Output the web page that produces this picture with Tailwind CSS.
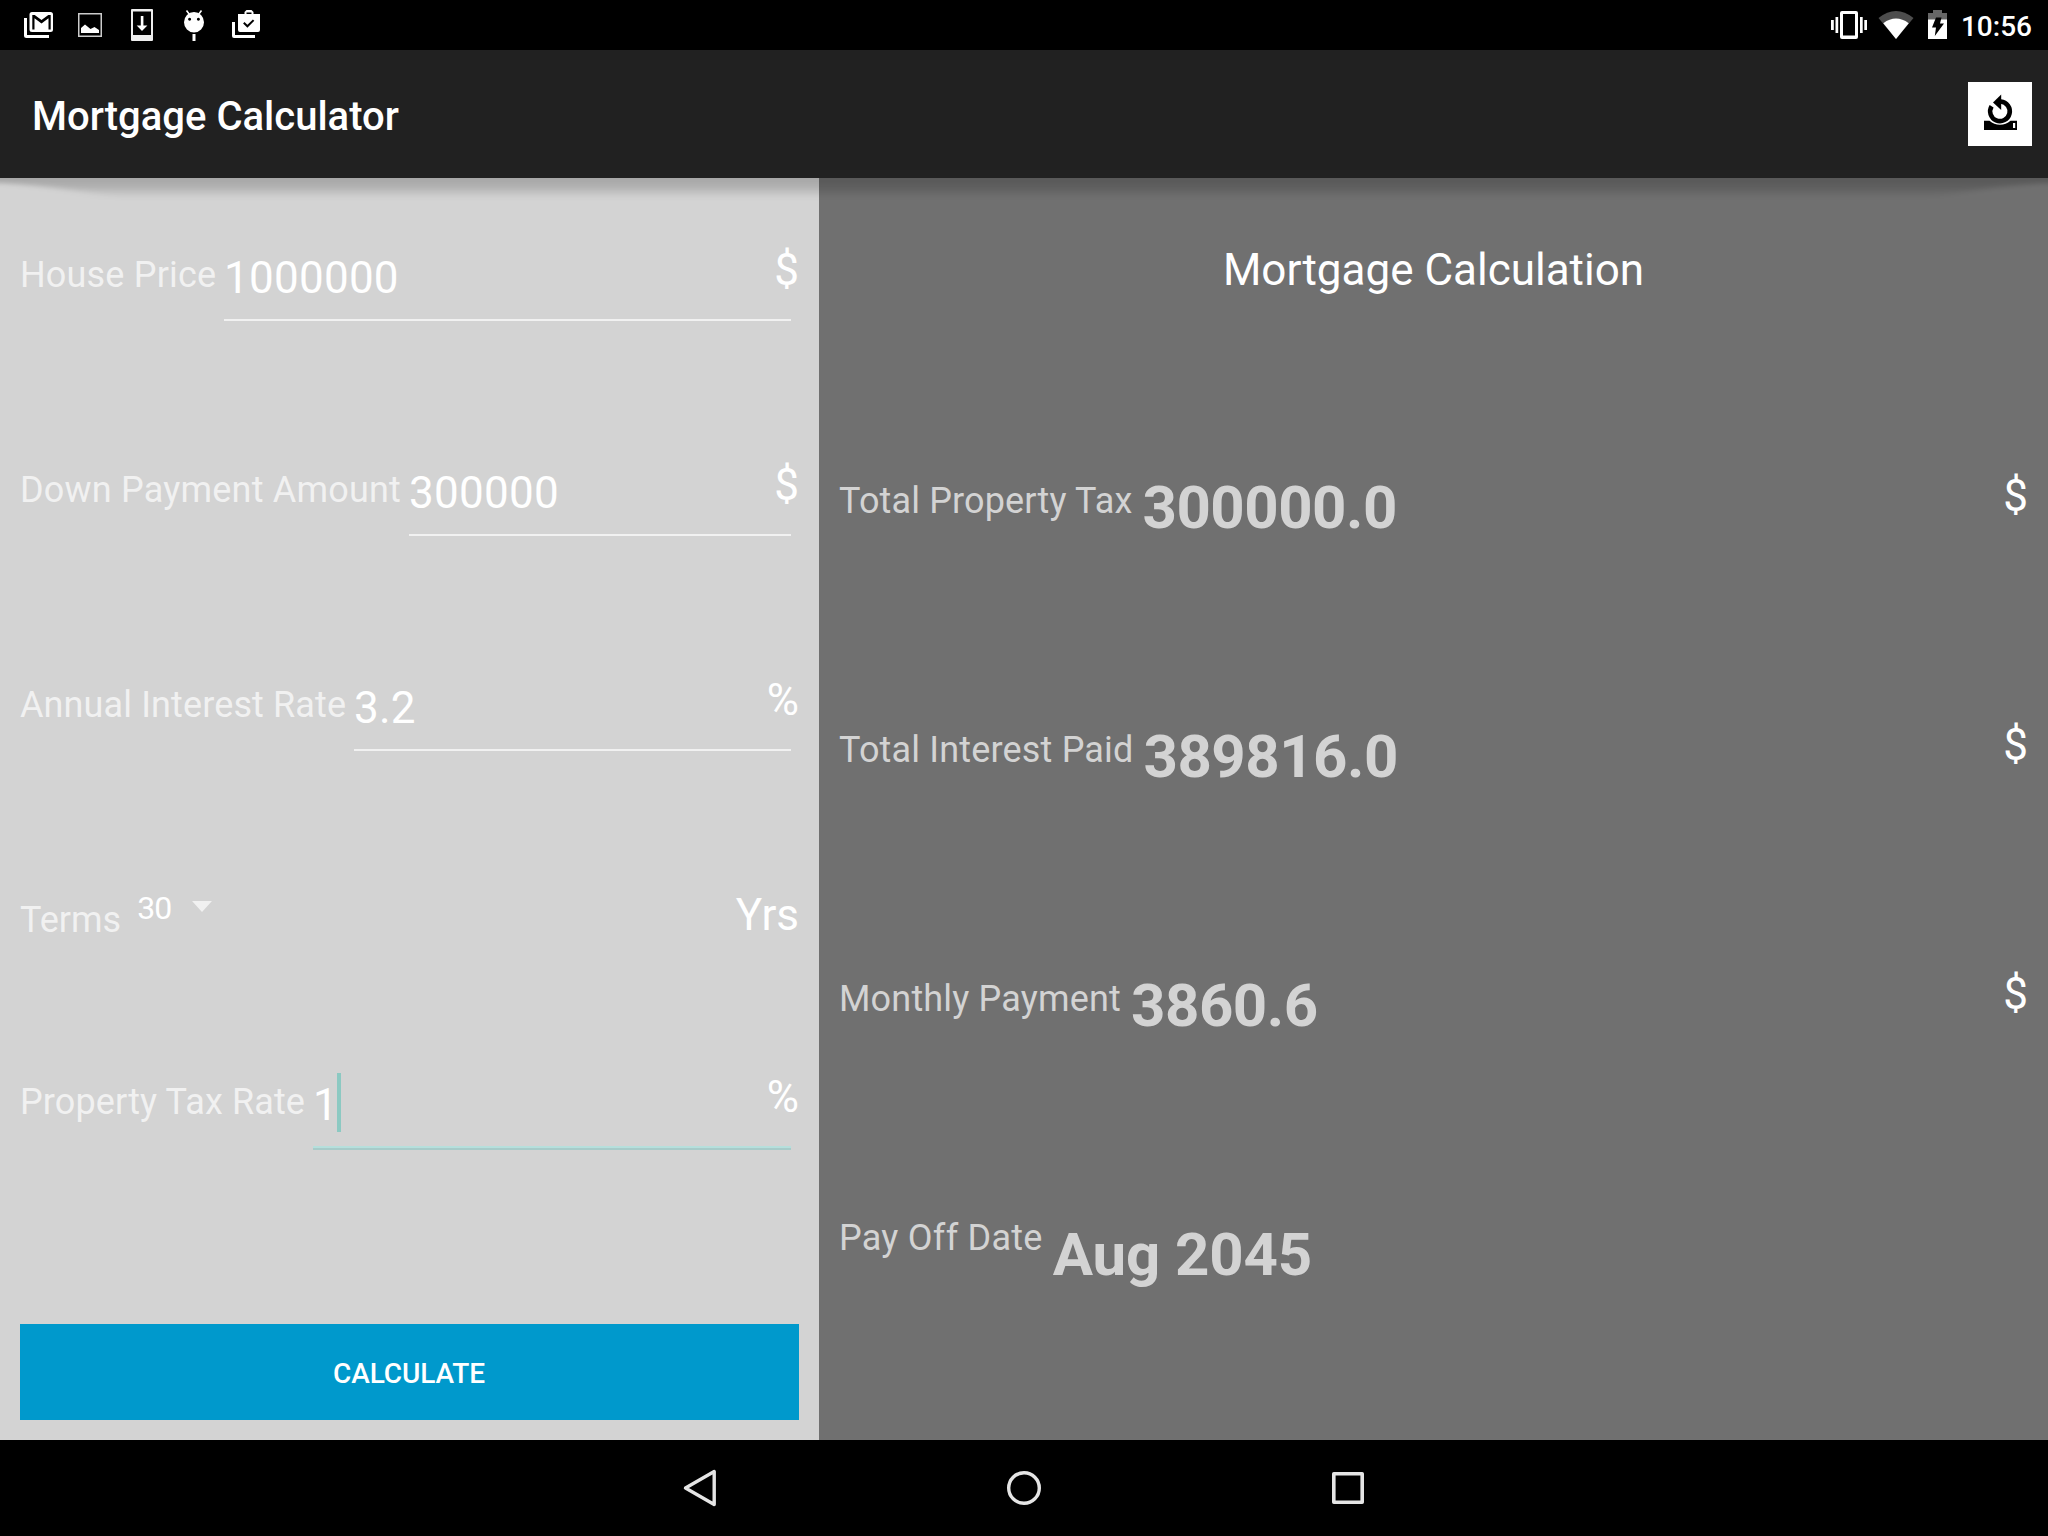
<!DOCTYPE html>
<html lang="en">
<head>
<meta charset="utf-8">
<title>Mortgage Calculator</title>
<script src="https://cdn.jsdelivr.net/npm/@tailwindcss/browser@4"></script>
</head>
<body class="flex h-[1536px] w-[2048px] flex-col overflow-hidden bg-black font-[Roboto,sans-serif] text-white">
  <!-- Status bar -->
  <div class="flex h-[50px] shrink-0 items-start justify-between bg-black">
    <svg width="280" height="50" viewBox="0 0 280 50" fill="#fff">
      <!-- mail stack -->
      <path d="M24 18h3v17h22v3H26.500q-2.500 0-2.500-2.500z"/>
      <path fill-rule="evenodd" d="M32 12h18.500q2.500 0 2.500 2.500v15q0 2.500-2.500 2.500H32q-2.500 0-2.500-2.500v-15q0-2.500 2.500-2.500zM32.300 29.500h2.200V18.300l7 5.200 7-5.200v11.200h2.200V15h-2.400l-6.800 5.100L34.700 15h-2.400z"/>
      <!-- picture -->
      <path fill-rule="evenodd" fill="#ccc" d="M78 13h24v24H78zM79.500 14.500v21h21v-21z"/>
      <path d="M81 33v-5l4-3.500 5.500 4.500 4-2 4.500 3v3z"/>
      <!-- download -->
      <path fill-rule="evenodd" fill="#eee" d="M132 9h20q1 0 1 1v30q0 1-1 1h-20q-1 0-1-1V10q0-1 1-1zM133 11.500V35h18V11.500z"/>
      <path d="M140.800 16h2.600v9.500h4L142 31l-5.300-5.500h4.100z"/>
      <!-- debug robot -->
      <path fill-rule="evenodd" d="M194 12a10 10.300 0 1 1 0 20.600a10 10.300 0 1 1 0-20.600zM189.600 17.700a1.500 1.500 0 1 0 .01 0zM198.400 17.700a1.500 1.500 0 1 0 .01 0z"/>
      <path d="M186.500 10.500l3 4M201.500 10.500l-3 4" stroke="#fff" stroke-width="1.600"/>
      <path d="M192.500 34h3v7h-3z"/>
      <!-- store bag stack -->
      <path d="M232 22h3v13h20v3h-21q-2 0-2-2z"/>
      <path fill-rule="evenodd" d="M238 14h6.500v-2l2-2h5l2 2v2h6.500v16q0 2-2 2h-18q-2 0-2-2zM246.500 12.500V14h5v-1.500z"/>
      <path d="M243.800 22.700l3.600 3.600 6.200-6.200" fill="none" stroke="#000" stroke-width="2"/>
    </svg>
    <div class="flex pr-[16px]">
      <svg class="-mr-[2px]" width="140" height="50" viewBox="1823 0 140 50" fill="#fff">
        <!-- vibrate -->
        <path fill-rule="evenodd" d="M1842 11h14q2 0 2 2v24q0 2-2 2h-14q-2 0-2-2V13q0-2 2-2zM1843 14v21.500h12V14z"/>
        <path d="M1831 20h2.800v10H1831zM1835.500 17h2.700v16h-2.700zM1860 17h2.700v16H1860zM1864.300 20h2.700v10h-2.700z"/>
        <!-- wifi -->
        <path fill="#4d4d4d" d="M1878.500 18q17.500-14 35 0L1896 39z"/>
        <path d="M1883.300 23.200q12.700-9.200 25.400 0L1896 39z"/>
        <!-- charging battery -->
        <path fill="#666" d="M1928 20v-7h5v-3h9v3h5v7z"/>
        <path d="M1928 19.500h19V39h-19z"/>
        <path fill="#000" d="M1936 17.500h5.500l-1.500 6h4L1934.800 36l1.200-8.500h-4z"/>
      </svg>
      <span class="mt-[10px] text-[28px] leading-[33px] font-medium">10:56</span>
    </div>
  </div>

  <!-- App bar -->
  <header class="relative z-10 flex h-[128px] shrink-0 items-center justify-between bg-[#212121] pr-4 pl-8">
    <h1 class="mt-1 text-[40px] leading-[47px] font-medium">Mortgage Calculator</h1>
    <button class="size-16 bg-white">
      <svg width="64" height="64" viewBox="0 0 64 64">
        <path d="M23.600 24.200A9.800 9.800 0 1 0 32.800 19.550" fill="none" stroke="#000" stroke-width="4.600"/>
        <path d="M33.200 12.500v15.500l-8.200-7.600z"/>
        <path fill-rule="evenodd" d="M16 38.700h5.500q4.500 4 10.500 4t10.500-4H49V48H16zM45 41v5h2.200v-5z"/>
      </svg>
    </button>
    <!-- Elevation shadow, tapering at both corners -->
    <svg class="absolute top-full left-0" width="2048" height="32" viewBox="0 0 2048 32">
      <defs>
        <linearGradient id="elevation" gradientUnits="userSpaceOnUse" x1="0" y1="0" x2="0" y2="21">
          <stop offset="0" stop-opacity=".21"/>
          <stop offset=".4" stop-opacity=".165"/>
          <stop offset=".75" stop-opacity=".06"/>
          <stop offset="1" stop-opacity="0"/>
        </linearGradient>
        <filter id="soften" x="-2%" y="-50%" width="104%" height="200%"><feGaussianBlur stdDeviation="12 2"/></filter>
      </defs>
      <path d="M-40-20H2088V5H2048Q1980 9 1925 22H123Q68 9 0 5H-40z" fill="url(#elevation)" filter="url(#soften)"/>
    </svg>
  </header>

  <main class="flex h-[1262px] shrink-0">
    <!-- Loan inputs -->
    <section class="flex w-[819px] flex-col bg-[#d3d3d3] px-5 pt-[66px]">
      <div class="relative flex h-[215px] items-start">
        <label class="mt-[10px] w-[196px] text-[36px] leading-[42px] tracking-[0.18px] whitespace-nowrap text-white/70">House Price</label>
        <div class="mt-2 mr-2 ml-2 flex-1 border-b-2 border-[#f1f1f1] pb-[15px] text-[44px] leading-[52px] tracking-[0.25px]">1000000</div>
        <span class="absolute top-0 right-0 text-[44px] leading-[52px]">$</span>
      </div>
      <div class="relative flex h-[215px] items-start">
        <label class="mt-[10px] w-[381px] text-[36px] leading-[42px] tracking-[0.2px] whitespace-nowrap text-white/70">Down Payment Amount</label>
        <div class="mt-2 mr-2 ml-2 flex-1 border-b-2 border-[#f1f1f1] pb-[15px] text-[44px] leading-[52px] tracking-[0.25px]">300000</div>
        <span class="absolute top-0 right-0 text-[44px] leading-[52px]">$</span>
      </div>
      <div class="relative flex h-[215px] items-start">
        <label class="mt-[10px] w-[326px] text-[36px] leading-[42px] tracking-[0.12px] whitespace-nowrap text-white/70">Annual Interest Rate</label>
        <div class="mt-2 mr-2 ml-2 flex-1 border-b-2 border-[#f1f1f1] pb-[15px] text-[44px] leading-[52px] tracking-[0.2px]">3.2</div>
        <span class="absolute top-0 right-0 text-[44px] leading-[52px]">%</span>
      </div>
      <div class="flex h-[182px] items-start">
        <label class="mt-[10px] text-[36px] leading-[42px] text-white/70">Terms</label>
        <div class="ml-4 flex items-start">
          <span class="text-[32px] leading-[38px] tracking-[-0.8px]">30</span>
          <svg class="mt-3 ml-5" width="20" height="11" viewBox="0 0 20 11" fill="#f1f1f1"><path d="M0 0h20L10 11z"/></svg>
        </div>
        <span class="ml-auto text-[44px] leading-[52px]">Yrs</span>
      </div>
      <div class="relative flex h-[253px] items-start">
        <label class="mt-[10px] w-[285px] text-[36px] leading-[42px] tracking-[0.12px] whitespace-nowrap text-white/70">Property Tax Rate</label>
        <div class="mt-2 mr-2 ml-2 flex flex-1 border-b-2 border-[#a7cbc9] text-[44px] leading-[52px]">
          <div class="flex flex-1 border-b-2 border-[#b6dfdc] pb-[15px]">
            <span>1</span>
            <span class="-mt-[6px] -mb-[1px] -ml-px h-[59px] w-[4px] bg-[#8cc9c2]"></span>
          </div>
        </div>
        <span class="absolute top-0 right-0 text-[44px] leading-[52px]">%</span>
      </div>
      <button class="h-24 bg-[#0099cc] pt-[2px] pr-px text-[28px] leading-[33px] font-medium tracking-[-0.1px]">CALCULATE</button>
    </section>

    <!-- Results -->
    <section class="flex flex-1 flex-col bg-[#707070] px-5 pt-[66px]">
      <h2 class="h-[226px] text-center text-[44px] leading-[52px]">Mortgage Calculation</h2>
      <div class="flex h-[249px] items-start text-[#d3d3d3]">
        <span class="mt-[10px] text-[36px] leading-[42px] tracking-[0.15px]">Total Property Tax</span>
        <span class="mt-[2px] ml-[10px] text-[60px] leading-[71px] font-bold tracking-[-0.5px]">300000.0</span>
        <span class="ml-auto text-[44px] leading-[52px] text-white">$</span>
      </div>
      <div class="flex h-[249px] items-start text-[#d3d3d3]">
        <span class="mt-[10px] text-[36px] leading-[42px] tracking-[0.17px]">Total Interest Paid</span>
        <span class="mt-[2px] ml-[10px] text-[60px] leading-[71px] font-bold tracking-[-0.5px]">389816.0</span>
        <span class="ml-auto text-[44px] leading-[52px] text-white">$</span>
      </div>
      <div class="flex h-[249px] items-start text-[#d3d3d3]">
        <span class="mt-[10px] text-[36px] leading-[42px] tracking-[0.18px]">Monthly Payment</span>
        <span class="mt-[2px] ml-[10px] text-[60px] leading-[71px] font-bold tracking-[-0.5px]">3860.6</span>
        <span class="ml-auto text-[44px] leading-[52px] text-white">$</span>
      </div>
      <div class="flex items-start text-[#d3d3d3]">
        <span class="text-[36px] leading-[42px] tracking-[0.26px]">Pay Off Date</span>
        <span class="mt-[2px] ml-[10px] text-[60px] leading-[71px] font-bold tracking-[-0.15px]">Aug 2045</span>
      </div>
    </section>
  </main>

  <!-- Navigation bar -->
  <nav class="flex h-24 shrink-0 items-center justify-center gap-[284px] bg-black">
    <svg width="40" height="40" viewBox="0 0 40 40" fill="none" stroke="#e5e5e5" stroke-width="3.400" stroke-linejoin="round"><path d="M34.200 3.500v33L5.500 20z"/></svg>
    <svg width="40" height="40" viewBox="0 0 40 40" fill="none" stroke="#e5e5e5" stroke-width="3.400"><circle cx="20" cy="20" r="15.300"/></svg>
    <svg width="40" height="40" viewBox="0 0 40 40" fill="none" stroke="#e5e5e5" stroke-width="3.600" stroke-linejoin="round"><path d="M5.800 5.800h28.400v28.400H5.800z"/></svg>
  </nav>
</body>
</html>
